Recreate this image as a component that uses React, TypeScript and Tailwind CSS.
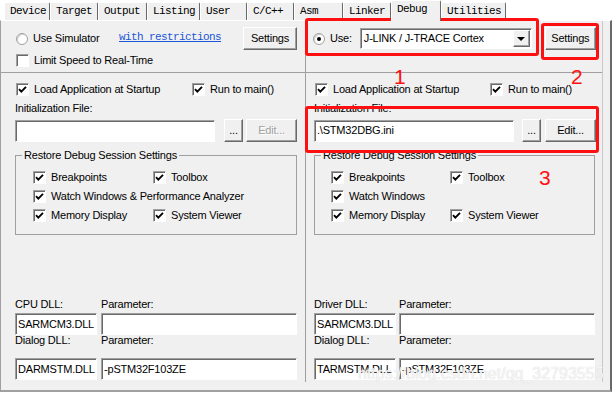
import React from "react";

const SANS = "font-['Liberation_Sans',Arial,sans-serif] text-[11px] tracking-[-0.2px] text-black";
const MONO = "font-['Liberation_Mono','Courier_New',monospace] text-[11px] tracking-[-0.6px] text-black";
const RAISED =
  "bg-[#f0f0f0] border border-t-white border-l-white border-r-[#696969] border-b-[#696969] shadow-[inset_-1px_-1px_0_#a0a0a0]";
const SUNKEN =
  "bg-white border border-t-[#a0a0a0] border-l-[#a0a0a0] border-r-white border-b-white shadow-[inset_1px_1px_0_#696969]";

const TABS = [
  { label: "Device", w: "w-[46px]" },
  { label: "Target", w: "w-[48px]" },
  { label: "Output", w: "w-[49px]" },
  { label: "Listing", w: "w-[53px]" },
  { label: "User", w: "w-[47px]" },
  { label: "C/C++", w: "w-[47px]" },
  { label: "Asm", w: "w-[49px]" },
  { label: "Linker", w: "w-[48px]" },
  { label: "Debug", w: "w-[50px]", active: true },
  { label: "Utilities", w: "w-[65px]" },
];

function Tab({ label, w, active }: { label: string; w: string; active?: boolean }) {
  return (
    <div
      className={`${w} ${
        active ? "h-[21px] -mb-px z-10" : "h-[18px]"
      } relative rounded-t-[2px] border-t border-l border-r border-t-white border-l-white border-r-[#696969] bg-[#f0f0f0] pl-[5px] pt-[2px] leading-[13px] whitespace-nowrap ${MONO}`}
    >
      {label}
    </div>
  );
}

function Check({ label, checked = true }: { label: string; checked?: boolean }) {
  return (
    <div className="flex items-center gap-[5px] h-[13px]">
      <span className={`w-[13px] h-[13px] shrink-0 flex items-center justify-center ${SUNKEN}`}>
        {checked && (
          <svg width="9" height="9" viewBox="0 0 9 9">
            <path d="M1 4.2 L3.3 6.6 L8 1.8" fill="none" stroke="black" strokeWidth="1.9" />
          </svg>
        )}
      </span>
      <span className="leading-[13px] whitespace-nowrap">{label}</span>
    </div>
  );
}

function Radio({ on }: { on?: boolean }) {
  return (
    <span className="w-[12px] h-[12px] shrink-0 rounded-full bg-white border border-[#a0a0a0] shadow-[inset_1px_1px_0_#d0d0d0] flex items-center justify-center">
      {on && <span className="w-[4px] h-[4px] rounded-full bg-black" />}
    </span>
  );
}

function Button({ children, w, disabled }: { children: React.ReactNode; w: string; disabled?: boolean }) {
  return (
    <div
      className={`${w} h-[23px] shrink-0 flex items-center justify-center leading-[13px] ${RAISED} ${
        disabled ? "text-[#a0a0a0] [text-shadow:1px_1px_0_white]" : ""
      }`}
    >
      {children}
    </div>
  );
}

function Field({ value, w }: { value?: string; w: string }) {
  return (
    <div className={`${w} h-[22px] shrink-0 flex items-center pl-[2px] leading-[13px] whitespace-nowrap ${SUNKEN}`}>
      {value}
    </div>
  );
}

function RestoreGroup({ w, pad, cell, full }: { w: string; pad: string; cell: string; full: string }) {
  return (
    <fieldset className={`mt-[7px] ${w} border border-[#a0a0a0] pl-[6px] pb-[12px]`}>
      <legend className="px-[2px] h-[13px] leading-[13px]">Restore Debug Session Settings</legend>
      <div className={`${pad} pt-[9px] flex flex-col gap-[6px]`}>
        <div className="flex">
          <div className={cell}>
            <Check label="Breakpoints" />
          </div>
          <Check label="Toolbox" />
        </div>
        <Check label={full} />
        <div className="flex">
          <div className={cell}>
            <Check label="Memory Display" />
          </div>
          <Check label="System Viewer" />
        </div>
      </div>
    </fieldset>
  );
}

export default function App() {
  return (
    <div className={`relative w-[612px] h-[396px] bg-white overflow-hidden ${SANS}`}>
      <div className="flex items-end h-[20px] pl-[4px]">
        {TABS.map((t) => (
          <Tab key={t.label} {...t} />
        ))}
      </div>

      <div className="h-[372px] bg-[#f0f0f0] border-t border-t-white border-l border-l-[#a0a0a0] border-r-2 border-r-[#696969] border-b-2 border-b-[#a0a0a0]">
        <div className="flex h-[361px]">
          {/* simulator column */}
          <div className="w-[305px] border-r border-r-[#a0a0a0] flex flex-col">
            <div className="h-[52px] border-b border-b-[#a0a0a0] pl-[15px] pt-[6px]">
              <div className="flex items-center h-[23px]">
                <div className="w-[103px] flex items-center gap-[5px]">
                  <Radio />
                  <span className="leading-[13px]">Use Simulator</span>
                </div>
                <span className={`w-[124px] -mt-[3px] underline ${MONO} !text-[#1a56d6]`}>
                  with restrictions
                </span>
                <Button w="w-[54px]">Settings</Button>
              </div>
              <div className="mt-[4px]">
                <Check label="Limit Speed to Real-Time" checked={false} />
              </div>
            </div>

            <div className="pl-[14px] flex flex-col">
              <div className="mt-[10px] flex pl-[1px]">
                <div className="w-[176px]">
                  <Check label="Load Application at Startup" />
                </div>
                <Check label="Run to main()" />
              </div>
              <div className="mt-[6px] h-[13px] leading-[13px]">Initialization File:</div>
              <div className="mt-[4px] flex items-center h-[23px]">
                <Field w="w-[200px]" />
                <div className="ml-[9px]">
                  <Button w="w-[19px]">...</Button>
                </div>
                <div className="ml-[3px]">
                  <Button w="w-[51px]" disabled>
                    Edit...
                  </Button>
                </div>
              </div>
              <RestoreGroup
                w="w-[282px]"
                pad="ml-[11px]"
                cell="w-[120px]"
                full="Watch Windows & Performance Analyzer"
              />
              <div className="mt-[63px] flex h-[13px] leading-[13px]">
                <span className="w-[86px]">CPU DLL:</span>
                <span>Parameter:</span>
              </div>
              <div className="mt-[2px] flex gap-[4px]">
                <Field w="w-[82px]" value="SARMCM3.DLL" />
                <Field w="w-[196px]" />
              </div>
              <div className="flex h-[11px] leading-[11px]">
                <span className="w-[86px]">Dialog DLL:</span>
                <span>Parameter:</span>
              </div>
              <div className="mt-[12px] flex gap-[4px]">
                <Field w="w-[82px]" value="DARMSTM.DLL" />
                <Field w="w-[196px]" value="-pSTM32F103ZE" />
              </div>
            </div>
          </div>

          {/* target driver column */}
          <div className="w-[297px] border-r border-r-[#c8c8c8] flex flex-col">
            <div className="h-[52px] border-b border-b-[#a0a0a0] pl-[7px] pt-[6px]">
              <div className="flex items-center h-[23px]">
                <Radio on />
                <span className="ml-[5px] leading-[13px]">Use:</span>
                <div className={`ml-[8px] w-[172px] h-[21px] flex items-center pl-[3px] pr-[1px] ${SUNKEN}`}>
                  <span className="flex-1 leading-[13px] whitespace-nowrap">J-LINK / J-TRACE Cortex</span>
                  <span className={`w-[17px] h-[17px] flex items-center justify-center ${RAISED}`}>
                    <svg width="8" height="4" viewBox="0 0 8 4">
                      <polygon points="0,0 8,0 4,4" fill="black" />
                    </svg>
                  </span>
                </div>
                <div className="ml-[13px]">
                  <Button w="w-[51px]">Settings</Button>
                </div>
              </div>
            </div>

            <div className="pl-[8px] flex flex-col">
              <div className="mt-[10px] flex pl-[1px]">
                <div className="w-[175px]">
                  <Check label="Load Application at Startup" />
                </div>
                <Check label="Run to main()" />
              </div>
              <div className="mt-[6px] h-[13px] leading-[13px]">Initialization File:</div>
              <div className="mt-[4px] flex items-center h-[23px]">
                <Field w="w-[200px]" value=".\STM32DBG.ini" />
                <div className="ml-[8px]">
                  <Button w="w-[19px]">...</Button>
                </div>
                <div className="ml-[4px]">
                  <Button w="w-[51px]">Edit...</Button>
                </div>
              </div>
              <RestoreGroup w="w-[281px]" pad="ml-[10px]" cell="w-[119px]" full="Watch Windows" />
              <div className="mt-[63px] flex h-[13px] leading-[13px]">
                <span className="w-[85px]">Driver DLL:</span>
                <span>Parameter:</span>
              </div>
              <div className="mt-[2px] flex gap-[3px]">
                <Field w="w-[82px]" value="SARMCM3.DLL" />
                <Field w="w-[196px]" />
              </div>
              <div className="flex h-[11px] leading-[11px]">
                <span className="w-[85px]">Dialog DLL:</span>
                <span>Parameter:</span>
              </div>
              <div className="mt-[12px] flex gap-[3px]">
                <Field w="w-[82px]" value="TARMSTM.DLL" />
                <Field w="w-[196px]" value="-pSTM32F103ZE" />
              </div>
            </div>
          </div>
        </div>
      </div>

      {/* annotations */}
      <div className="absolute left-[305px] top-[18px] w-[234px] h-[38px] border-[3px] border-[#ff1010] rounded-[3px]" />
      <div className="absolute left-[541px] top-[23px] w-[58px] h-[37px] border-[3px] border-[#ff1010] rounded-[3px]" />
      <div className="absolute left-[305px] top-[106px] w-[294px] h-[47px] border-[3px] border-[#ff1010] rounded-[3px]" />
      <span className="absolute left-[394px] top-[66px] text-[21px] leading-[21px] tracking-normal text-[#ff1010]">1</span>
      <span className="absolute left-[571px] top-[66px] text-[21px] leading-[21px] tracking-normal text-[#ff1010]">2</span>
      <span className="absolute left-[539px] top-[167px] text-[21px] leading-[21px] tracking-normal text-[#ff1010]">3</span>
      <span className="absolute left-[358px] top-[364px] text-[16px] leading-[20px] tracking-normal text-white/80 [text-shadow:0_0_1px_#c4c4c4]">
        https://blog.csdn.net/qq_32793555
      </span>
    </div>
  );
}
